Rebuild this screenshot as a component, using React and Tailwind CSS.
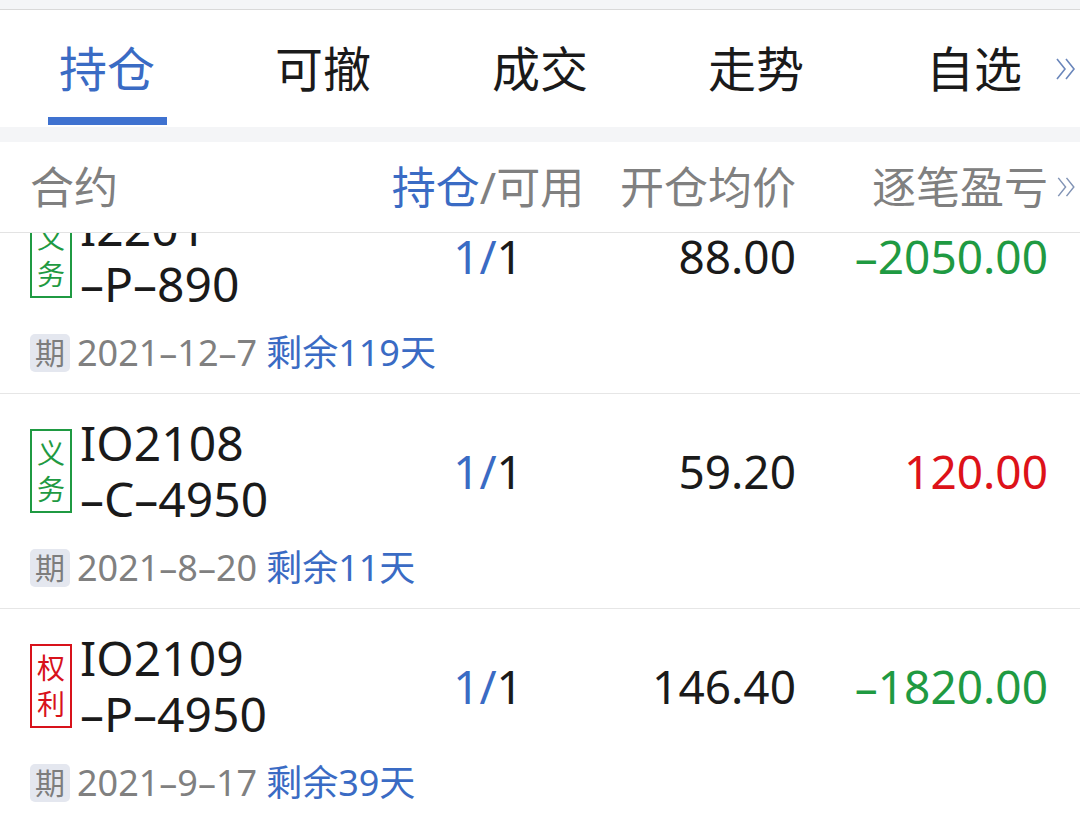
import React from 'react';

const tabs = [
  { label: '持仓', w: 'w-[214px] justify-center', active: true },
  { label: '可撤', w: 'w-[218px] justify-center' },
  { label: '成交', w: 'w-[216px] justify-center' },
  { label: '走势', w: 'w-[216px] justify-center' },
  { label: '自选', w: 'w-[190px] justify-start pl-[62px]' },
];

const positions = [
  {
    kind: 'duty',
    code: ['I2201', '–P–890'],
    avg: '88.00',
    pnl: '–2050.00',
    expire: '2021–12–7',
    left: '剩余119天',
  },
  {
    kind: 'duty',
    code: ['IO2108', '–C–4950'],
    avg: '59.20',
    pnl: '120.00',
    expire: '2021–8–20',
    left: '剩余11天',
  },
  {
    kind: 'right',
    code: ['IO2109', '–P–4950'],
    avg: '146.40',
    pnl: '–1820.00',
    expire: '2021–9–17',
    left: '剩余39天',
  },
];

function More({ className }) {
  return (
    <svg viewBox="0 0 22 24" className={className} fill="none" stroke="currentColor" strokeWidth="1.6">
      <path d="M2 2 L10 12 L2 22 M11 2 L19 12 L11 22" />
    </svg>
  );
}

function Tag({ kind }) {
  const isRight = kind === 'right';
  return (
    <div
      className={
        'w-[42px] h-[84px] shrink-0 border-2 flex flex-col items-center justify-center text-[28px] leading-[36px] ' +
        (isRight ? 'border-[#d8121b] text-[#d8121b]' : 'border-[#1f9a42] text-[#1f9a42]')
      }
    >
      <span>{isRight ? '权' : '义'}</span>
      <span>{isRight ? '利' : '务'}</span>
    </div>
  );
}

function PositionRow({ item }) {
  const loss = item.pnl.startsWith('–');
  return (
    <div className="h-[215px] border-b border-[#e6e6e6] pl-[30px] pt-[21px]">
      <div className="flex items-center h-[112px]">
        <div className="w-[360px] flex items-center">
          <Tag kind={item.kind} />
          <div className="ml-[8px] text-[48px] leading-[56px] text-[#1a1a1a]">
            <div>{item.code[0]}</div>
            <div>{item.code[1]}</div>
          </div>
        </div>
        <div className="w-[196px] text-center text-[46px] text-[#1a1a1a]">
          <span className="text-[#3a6bc4]">1/</span>1
        </div>
        <div className="w-[210px] text-right text-[46px] text-[#1a1a1a]">{item.avg}</div>
        <div className={'w-[252px] text-right text-[46px] ' + (loss ? 'text-[#1f9a42]' : 'text-[#dd1219]')}>
          {item.pnl}
        </div>
      </div>
      <div className="mt-[22px] flex items-center h-[38px]">
        <span className="w-[40px] h-[38px] rounded-[5px] bg-[#e4e7ef] text-[#7d7d7d] text-[30px] leading-[38px] text-center">
          期
        </span>
        <span className="ml-[7px] text-[36px] text-[#808080]">{item.expire}</span>
        <span className="ml-[9px] text-[36px] text-[#3a6bc4]">{item.left}</span>
      </div>
    </div>
  );
}

export default function App() {
  return (
    <div
      className="w-[1080px] h-[820px] overflow-hidden bg-white flex flex-col"
      style={{ fontFamily: '"Noto Sans", "Noto Sans CJK SC", sans-serif' }}
    >
      <div className="h-[10px] shrink-0 bg-[#f4f5f7] border-b border-[#d9d9d9]" />

      {/* tabs */}
      <div className="h-[117px] shrink-0 flex items-center">
        {tabs.map((t) => (
          <div key={t.label} className={t.w + ' shrink-0 relative h-full flex items-center'}>
            <span className={'text-[48px] ' + (t.active ? 'text-[#3a6bc4]' : 'text-[#1a1a1a]')}>{t.label}</span>
            {t.active && (
              <div className="absolute bottom-[2px] left-[48px] w-[119px] h-[8px] bg-[#3f72d0]" />
            )}
          </div>
        ))}
        <More className="shrink-0 ml-[1px] w-[22px] h-[24px] text-[#6a86bb]" />
      </div>

      <div className="h-[15px] shrink-0 bg-[#f4f5f7]" />

      {/* column header */}
      <div className="h-[91px] shrink-0 border-b border-[#e3e3e3] pl-[30px] flex items-center text-[44px] text-[#808080]">
        <div className="w-[360px] shrink-0">合约</div>
        <div className="w-[196px] shrink-0 text-center">
          <span className="text-[#3a6bc4]">持仓</span>/可用
        </div>
        <div className="w-[210px] shrink-0 text-right">开仓均价</div>
        <div className="w-[252px] shrink-0 text-right">逐笔盈亏</div>
        <More className="shrink-0 ml-[8px] w-[21px] h-[22px] text-[#8193b5]" />
      </div>

      {/* list, scrolled so the first row sits under the header */}
      <div className="flex-1 overflow-hidden">
        <div className="-mt-[54px]">
          {positions.map((p) => (
            <PositionRow key={p.code.join('')} item={p} />
          ))}
        </div>
      </div>
    </div>
  );
}
